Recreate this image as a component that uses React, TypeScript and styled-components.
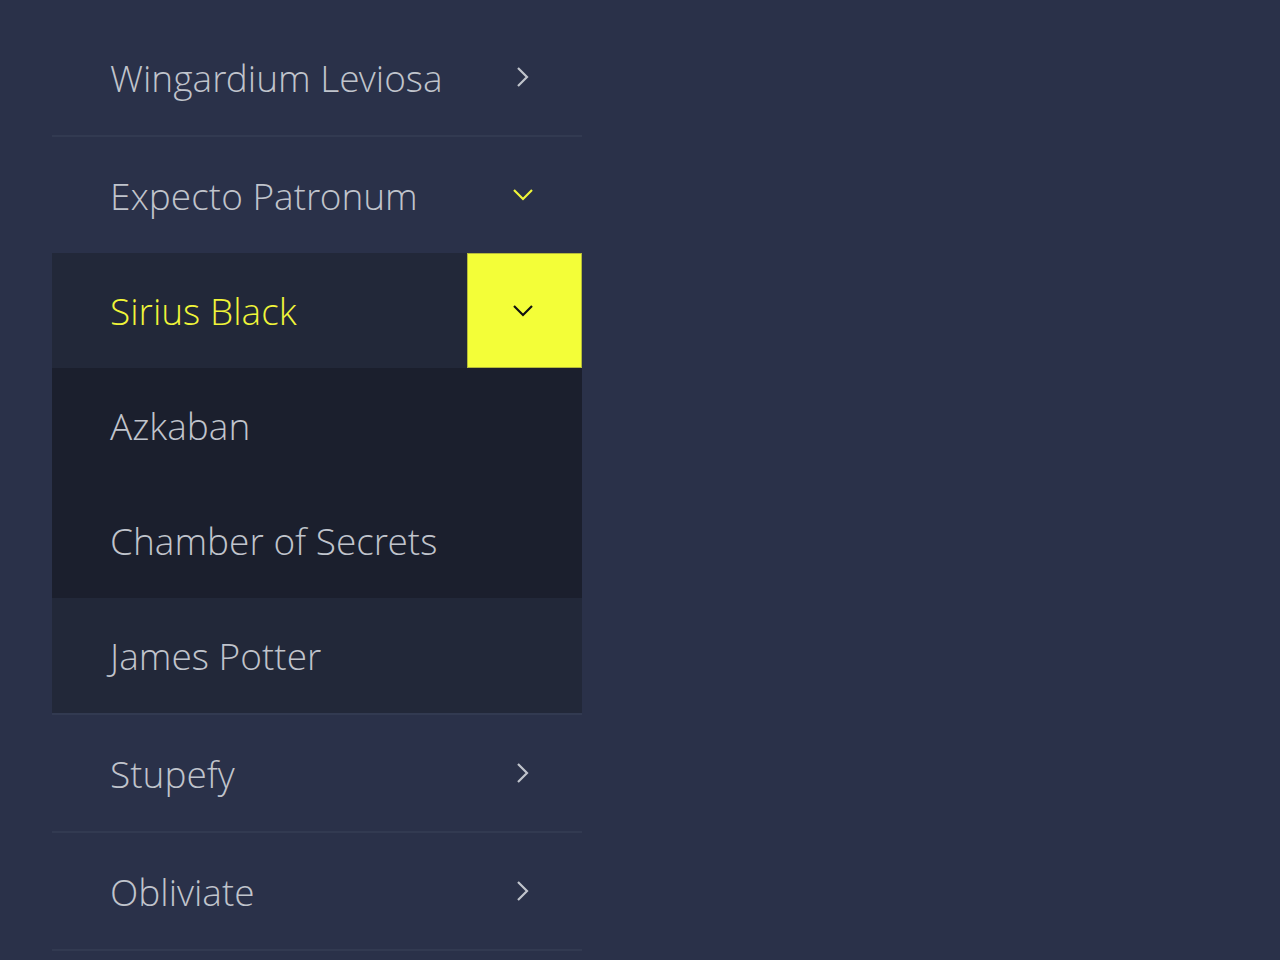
import React, { useState } from 'react'
import styled, { createGlobalStyle } from 'styled-components'

const GlobalStyle = createGlobalStyle`
  html, body {
    margin: 0;
    background: #2a3149;
    font-family: "Open Sans", "Liberation Sans", sans-serif;
  }
`

const Page = styled.div`
  min-height: 960px;
  padding: 19px 0 0 52px;
  box-sizing: border-box;
`

const Menu = styled.ul`
  list-style: none;
  margin: 0;
  padding: 0;
  width: 530px;
`

const Item = styled.li`
  border-bottom: 2px solid #323a51;
`

const Row = styled.div<{ $tone: 'base' | 'mid' | 'deep' }>`
  display: flex;
  align-items: center;
  height: ${({ $tone }) => ($tone === 'base' ? '116px' : '115px')};
  background: ${({ $tone }) =>
    $tone === 'mid' ? '#222839' : $tone === 'deep' ? '#1b1f2d' : 'transparent'};
  cursor: pointer;
`

const Label = styled.span<{ $active?: boolean }>`
  flex: 1;
  padding-left: 58px;
  font-family: "Open Sans Light", "Open Sans", "Liberation Sans", sans-serif;
  font-size: 37px;
  font-weight: 300;
  color: ${({ $active }) => ($active ? '#f0f539' : '#c0c4cc')};
  white-space: nowrap;
`

const Toggle = styled.span<{ $filled?: boolean }>`
  display: flex;
  align-items: center;
  justify-content: center;
  box-sizing: border-box;
  width: 115px;
  height: 115px;
  padding-right: 3px;
  flex-shrink: 0;
  background: ${({ $filled }) => ($filled ? '#f3fe38' : 'transparent')};
  box-shadow: ${({ $filled }) => ($filled ? 'inset 0 0 0 1px #b4ba3a' : 'none')};
`

const SubList = styled.ul`
  list-style: none;
  margin: 0;
  padding: 0;
`

type Dir = 'right' | 'down'

const Chevron = ({ dir, color }: { dir: Dir; color: string }) =>
  dir === 'right' ? (
    <svg width="14" height="22" viewBox="0 0 14 22" fill="none">
      <path d="M2 2 L11 11 L2 20" stroke={color} strokeWidth="2.2" />
    </svg>
  ) : (
    <svg width="22" height="14" viewBox="0 0 22 14" fill="none">
      <path d="M2 2 L11 11 L20 2" stroke={color} strokeWidth="2.2" />
    </svg>
  )

const App = () => {
  const [open] = useState(true)

  return (
    <Page>
      <GlobalStyle />
      <Menu>
        <Item>
          <Row $tone="base">
            <Label>Wingardium Leviosa</Label>
            <Toggle>
              <Chevron dir="right" color="#c0c4cc" />
            </Toggle>
          </Row>
        </Item>
        <Item>
          <Row $tone="base">
            <Label>Expecto Patronum</Label>
            <Toggle>
              <Chevron dir="down" color="#f0f539" />
            </Toggle>
          </Row>
          {open && (
            <SubList>
              <li>
                <Row $tone="mid">
                  <Label $active>Sirius Black</Label>
                  <Toggle $filled>
                    <Chevron dir="down" color="#111" />
                  </Toggle>
                </Row>
                <SubList>
                  <li>
                    <Row $tone="deep">
                      <Label>Azkaban</Label>
                    </Row>
                  </li>
                  <li>
                    <Row $tone="deep">
                      <Label>Chamber of Secrets</Label>
                    </Row>
                  </li>
                </SubList>
              </li>
              <li>
                <Row $tone="mid">
                  <Label>James Potter</Label>
                </Row>
              </li>
            </SubList>
          )}
        </Item>
        <Item>
          <Row $tone="base">
            <Label>Stupefy</Label>
            <Toggle>
              <Chevron dir="right" color="#c0c4cc" />
            </Toggle>
          </Row>
        </Item>
        <Item>
          <Row $tone="base">
            <Label>Obliviate</Label>
            <Toggle>
              <Chevron dir="right" color="#c0c4cc" />
            </Toggle>
          </Row>
        </Item>
      </Menu>
    </Page>
  )
}

export default App
